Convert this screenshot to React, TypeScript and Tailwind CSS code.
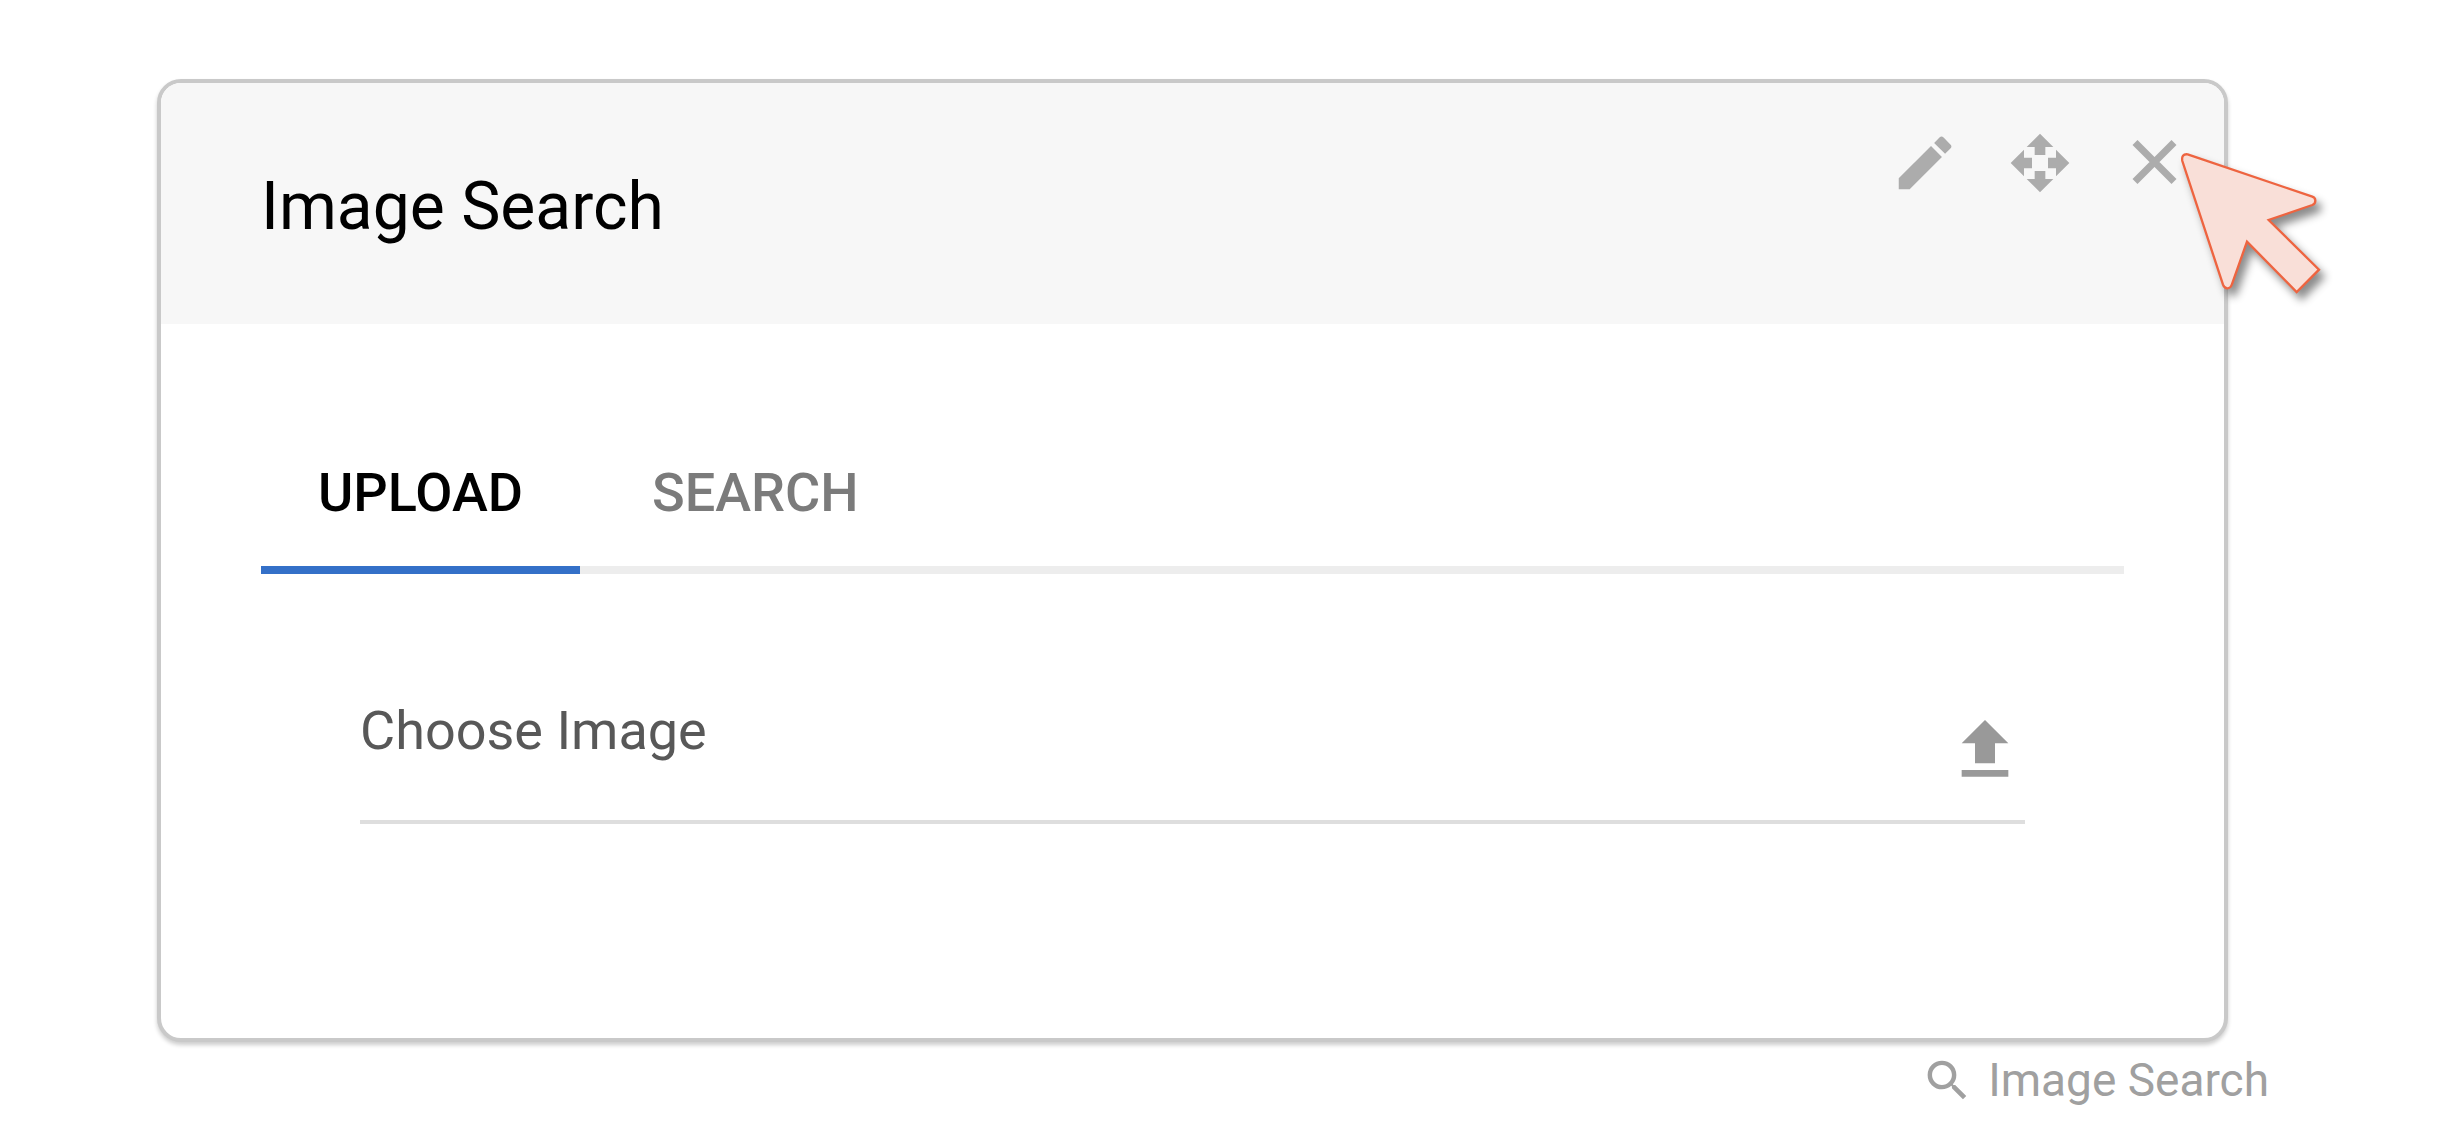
import { useState } from "react";

function PencilIcon() {
  return (
    <svg viewBox="0 0 24 24" className="size-[70px]" fill="currentColor" aria-hidden="true">
      <path d="M3 17.25V21h3.75L17.81 9.94l-3.75-3.75L3 17.25zM20.71 7.04a1 1 0 0 0 0-1.41l-2.34-2.34a1 1 0 0 0-1.41 0l-1.83 1.83 3.75 3.75 1.83-1.83z" />
    </svg>
  );
}

function MoveIcon() {
  return (
    <svg viewBox="0 0 24 24" className="size-16" fill="currentColor" aria-hidden="true">
      <path d="M10 9h4V6h3l-5-5-5 5h3v3zM9 10H6V7l-5 5 5 5v-3h3v-4zM23 12l-5-5v3h-3v4h3v3l5-5zM14 15h-4v3H7l5 5 5-5h-3v-3z" />
    </svg>
  );
}

function CloseIcon() {
  return (
    <svg viewBox="0 0 72 72" className="size-[72px]" fill="none" stroke="currentColor" strokeWidth="7" aria-hidden="true">
      <path d="M16 15.5 55 54.5M55 15.5 16 54.5" />
    </svg>
  );
}

function UploadIcon() {
  return (
    <svg viewBox="0 0 24 24" className="size-20" fill="currentColor" aria-hidden="true">
      <path d="M9 16h6v-6h4l-7-7-7 7h4zM5 18h14v2H5z" />
    </svg>
  );
}

function SearchIcon() {
  return (
    <svg viewBox="0 0 24 24" className="size-[53px]" fill="currentColor" aria-hidden="true">
      <path d="M15.5 14h-.79l-.28-.27A6.471 6.471 0 0 0 16 9.5 6.5 6.5 0 1 0 9.5 16c1.61 0 3.09-.59 4.23-1.57l.27.28v.79l5 4.99L20.49 19l-4.99-5zm-6 0C7.01 14 5 11.99 5 9.5S7.01 5 9.5 5 14 7.01 14 9.5 11.99 14 9.5 14z" />
    </svg>
  );
}

function Pointer() {
  return (
    <svg
      viewBox="0 0 480 480"
      className="pointer-events-none absolute top-16 -right-[113px] size-40 overflow-visible drop-shadow-[5px_7px_4px_rgba(0,0,0,0.45)]"
      aria-hidden="true"
    >
      <path
        d="M32 22 406 149Q415 152 415 161 415 170 406 174L275 219 426 368 359 435 210 284 165 411Q161 424 151 424 142 424 138 413L16 42Q12 20 32 22Z"
        fill="#f9dfd8"
        stroke="#ee6440"
        strokeWidth="7"
      />
    </svg>
  );
}

const iconButton = "flex size-[72px] items-center justify-center";
const tabs = ["Upload", "Search"];

export default function App() {
  const [active, setActive] = useState("Upload");

  return (
    <main className="min-h-screen bg-white pt-[79px] pr-[216px] pl-[157px] font-['Roboto',sans-serif]">
      <section className="relative rounded-3xl border-4 border-[#c9c9c9] bg-white shadow-[0_3px_4px_rgba(0,0,0,0.2)]">
        <header className="flex items-start justify-between rounded-t-[20px] bg-[#f7f7f7] pr-[33px] pl-[100px]">
          <h1 className="pt-[84px] pb-[77px] text-[66px] leading-[80px] text-black">Image Search</h1>
          <div className="flex gap-[43px] pt-11 text-[#acacac]">
            <button type="button" aria-label="Edit" className={iconButton}><PencilIcon /></button>
            <button type="button" aria-label="Move" className={iconButton}><MoveIcon /></button>
            <button type="button" aria-label="Close" className={iconButton}><CloseIcon /></button>
          </div>
        </header>

        <div className="px-[100px] pt-[137px] pb-[214px]">
          <div role="tablist" className="flex gap-[15px] shadow-[inset_0_-8px_0_#ededed]">
            {tabs.map((tab) => (
              <button
                key={tab}
                type="button"
                role="tab"
                aria-selected={active === tab}
                onClick={() => setActive(tab)}
                className={
                  "border-b-8 px-[57px] pb-[41px] text-[54px] leading-[64px] font-medium uppercase " +
                  (active === tab ? "border-[#3470c8] text-black" : "border-transparent text-[#7b7b7b]")
                }
              >
                {tab}
              </button>
            ))}
          </div>

          <div className="px-[99px] pt-[125px]">
            <label className="flex items-start justify-between border-b-4 border-[#dedede] pb-[30px]">
              <span className="text-[54px] leading-[64px] text-[#585858]">Choose Image</span>
              <input type="file" accept="image/*" className="hidden" />
              <span className="pt-[11px] text-[#999999]"><UploadIcon /></span>
            </label>
          </div>
        </div>

        <Pointer />
      </section>

      <footer className="-mr-[41px] flex items-center justify-end gap-[14px] pt-[10px] text-[#a0a0a0]">
        <SearchIcon />
        <span className="text-[46px] leading-[56px]">Image Search</span>
      </footer>
    </main>
  );
}
